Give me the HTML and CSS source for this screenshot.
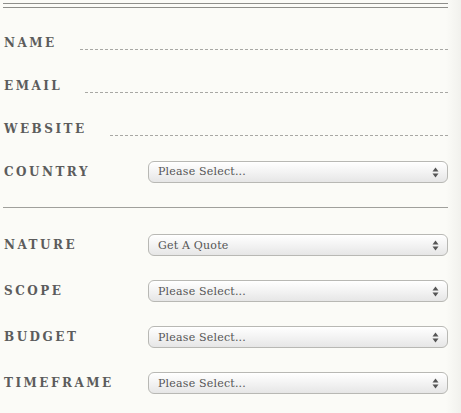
FILE: index.html
```html
<!DOCTYPE html>
<html>
<head>
<meta charset="utf-8">
<link rel="stylesheet" href="styles.css">
</head>
<body>
<form class="form">
  <div class="rule-double"></div>
  <div class="group group-top">
    <div class="row">
      <label class="label">NAME</label>
      <input class="text" type="text">
    </div>
    <div class="row">
      <label class="label">EMAIL</label>
      <input class="text" type="text">
    </div>
    <div class="row">
      <label class="label">WEBSITE</label>
      <input class="text" type="text">
    </div>
    <div class="row">
      <label class="label label-fixed">COUNTRY</label>
      <div class="select" role="listbox">
        <span class="select-value">Please Select...</span>
        <svg class="arrows" width="7" height="11" viewBox="0 0 7 11"><path d="M3.5 0.5 L6.5 4.5 L0.5 4.5 Z M3.5 10.5 L6.5 6.5 L0.5 6.5 Z" fill="#555"/></svg>
      </div>
    </div>
  </div>
  <div class="rule"></div>
  <div class="group group-bottom">
    <div class="row row-tall">
      <label class="label label-fixed">NATURE</label>
      <div class="select" role="listbox">
        <span class="select-value">Get A Quote</span>
        <svg class="arrows" width="7" height="11" viewBox="0 0 7 11"><path d="M3.5 0.5 L6.5 4.5 L0.5 4.5 Z M3.5 10.5 L6.5 6.5 L0.5 6.5 Z" fill="#555"/></svg>
      </div>
    </div>
    <div class="row row-tall">
      <label class="label label-fixed">SCOPE</label>
      <div class="select" role="listbox">
        <span class="select-value">Please Select...</span>
        <svg class="arrows" width="7" height="11" viewBox="0 0 7 11"><path d="M3.5 0.5 L6.5 4.5 L0.5 4.5 Z M3.5 10.5 L6.5 6.5 L0.5 6.5 Z" fill="#555"/></svg>
      </div>
    </div>
    <div class="row row-tall">
      <label class="label label-fixed">BUDGET</label>
      <div class="select" role="listbox">
        <span class="select-value">Please Select...</span>
        <svg class="arrows" width="7" height="11" viewBox="0 0 7 11"><path d="M3.5 0.5 L6.5 4.5 L0.5 4.5 Z M3.5 10.5 L6.5 6.5 L0.5 6.5 Z" fill="#555"/></svg>
      </div>
    </div>
    <div class="row row-tall">
      <label class="label label-fixed">TIMEFRAME</label>
      <div class="select" role="listbox">
        <span class="select-value">Please Select...</span>
        <svg class="arrows" width="7" height="11" viewBox="0 0 7 11"><path d="M3.5 0.5 L6.5 4.5 L0.5 4.5 Z M3.5 10.5 L6.5 6.5 L0.5 6.5 Z" fill="#555"/></svg>
      </div>
    </div>
  </div>
</form>
</body>
</html>
```
FILE: styles.css
```css
html, body {
  margin: 0;
  padding: 0;
}
body {
  width: 461px;
  height: 413px;
  overflow: hidden;
  background: linear-gradient(to right, #fbfbf7 0, #fbfbf7 446px, #f1f1ed 461px);
  font-family: "DejaVu Serif", "Liberation Serif", serif;
  color: #555;
}
.form {
  margin: 0 0 0 3px;
  padding-top: 3px;
  width: 445px;
  display: flex;
  flex-direction: column;
}
.rule-double {
  height: 3px;
  border-top: 1px solid #8e8e8a;
  border-bottom: 1px solid #8e8e8a;
}
.group {
  display: flex;
  flex-direction: column;
}
.group-top {
  padding-top: 13px;
}
.row {
  height: 43px;
  display: flex;
  align-items: center;
  padding-left: 1px;
}
.row-tall {
  height: 46px;
}
.label {
  font-size: 12px;
  font-weight: bold;
  letter-spacing: 2.5px;
  color: #5c5c5c;
  line-height: 14px;
  flex: none;
}
.label-fixed {
  width: 144px;
}
.text {
  flex: 1;
  margin-left: 23px;
  height: 12px;
  margin-top: 2px;
  border: none;
  border-bottom: 1px dashed #a8a8a4;
  background: transparent;
  padding: 0;
  outline: none;
}
.rule {
  margin-top: 14px;
  height: 0;
  border-top: 1px solid #a0a09c;
}
.group-bottom {
  padding-top: 14px;
}
.select {
  position: relative;
  flex: 1;
  height: 22px;
  box-sizing: border-box;
  border: 1px solid #b8b8b4;
  border-radius: 6px;
  background: linear-gradient(to bottom, #ffffff 0%, #f3f3f3 50%, #e6e6e6 100%);
  box-shadow: inset 0 1px 0 #fff;
  display: flex;
  align-items: center;
  padding-left: 9px;
}
.select-value {
  font-family: "DejaVu Serif", "Liberation Serif", serif;
  font-size: 11px;
  letter-spacing: 0.2px;
  color: #555;
  line-height: 13px;
}
.arrows {
  position: absolute;
  right: 8px;
  top: 5px;
}
```
